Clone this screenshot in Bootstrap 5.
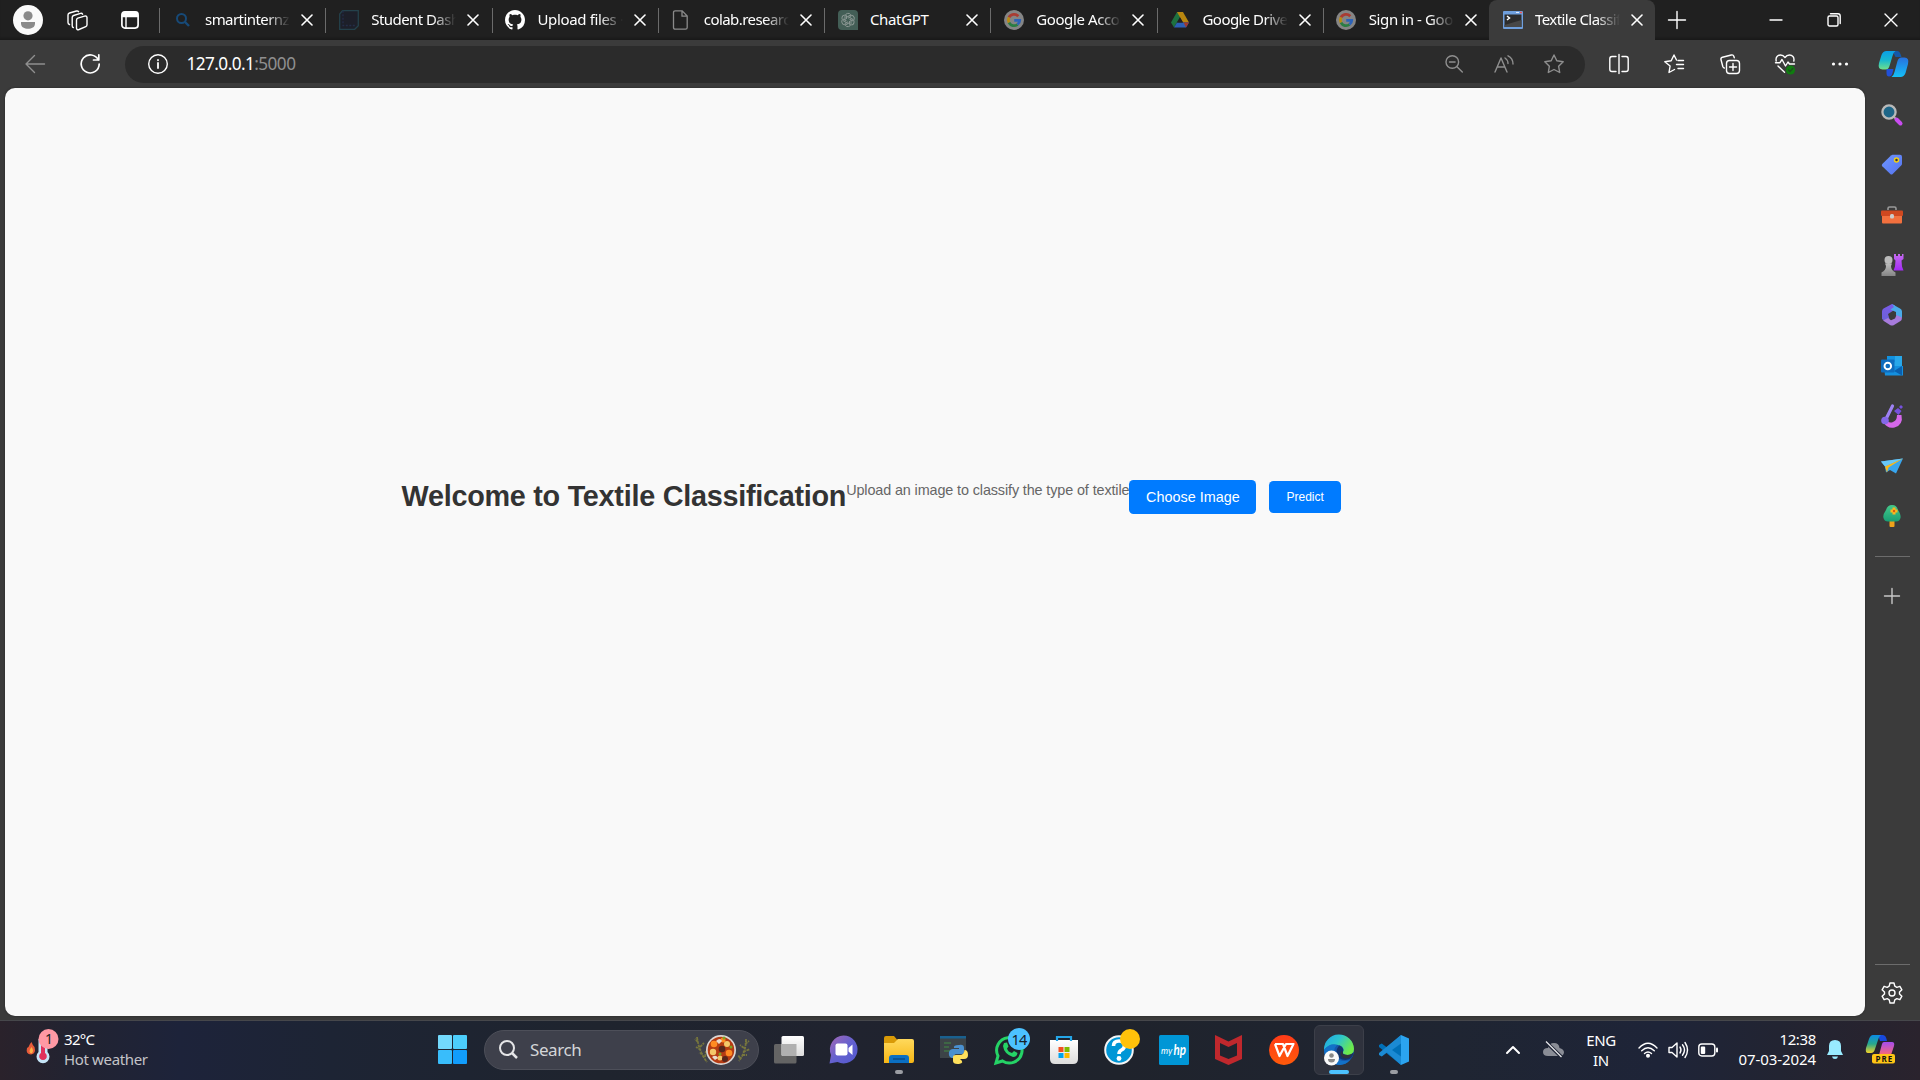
<!DOCTYPE html>
<html lang="en">
<head>
<meta charset="utf-8">
<title>Textile Classification</title>
<link href="https://cdn.jsdelivr.net/npm/bootstrap@5.3.0/dist/css/bootstrap.min.css" rel="stylesheet">
<style>
body{background:#3b3b3b;font-family:"Noto Sans","Open Sans",sans-serif;color:#fff;font-size:15px;line-height:20px;overflow:hidden}
svg{display:block;flex:none;overflow:visible}
.ln{fill:none;stroke:#fff;stroke-width:1.4;stroke-linecap:round;stroke-linejoin:round}
.dim{stroke:#8f8f8f}
.strip{height:40px;background:#202020;box-shadow:inset 0 -3px 2px -1px #1a1a1a}
.s56{width:56px}.s43{width:43px}.s60{width:60px}.s57{width:57.5px}.s55{width:55px}.s50{width:50px}.s66{width:66px}
.tabx{width:166.25px;height:40px;padding-left:13.5px;position:relative;flex:none}
.tabx::before{content:"";position:absolute;left:0;top:8px;width:1px;height:25px;background:#6b6b6b}
.tabx .ttl{width:85px;margin-left:12.5px;padding-bottom:1.5px;overflow:hidden;white-space:nowrap;letter-spacing:-.56px;-webkit-mask-image:linear-gradient(90deg,#000 72%,transparent)}
.tabx .ttl.full{-webkit-mask-image:none;letter-spacing:-.36px}
.tabx .xx{margin-left:11px}
.tabx.on{background:#3b3b3b;border-radius:8px 8px 0 0}
.tabx.on::before{display:none}
.bar{height:48px;padding-left:7.5px}
.addr{width:1460px;height:37px;border-radius:19px;background:#2b2b2b;margin:0 7px 0 7.5px;padding-right:6px;font-size:17.2px;letter-spacing:-.56px}
.addr i{font-style:normal;color:#8f8f8f}
.mid{height:932px;padding-left:5px}
.view{width:1860px;height:928px;background:#f9f9f9;border-radius:10px;padding:392px 0 0 396.5px;font-family:"Liberation Sans",sans-serif;box-shadow:0 0 2px #222}
.view h1{font-size:28.8px;font-weight:700;line-height:33px;color:#333;margin:0;white-space:nowrap;letter-spacing:-.265px}
.view p{font-size:14.4px;line-height:17px;color:#666;margin:2px 0 0;white-space:nowrap;letter-spacing:-.118px}
.go{background:#007bff;color:#fff;border-radius:4.5px;border:0;padding:0;--bs-btn-hover-bg:#007bff}
.pick{width:127px;height:34px;margin-top:-.5px;font-size:14.4px;line-height:34px}
.pred{width:72.5px;height:32px;margin:1px 0 0 12.5px;font-size:12px;line-height:32px}
.side{width:54px;padding-top:2px}
.side .it{height:50.1px}
.rule{width:35px;height:1px;background:#6c6c6c}
.task{height:60px;padding-bottom:1.5px;border-top:1px solid #46474b;background:linear-gradient(90deg,#2a222b 0,#222331 70px,#1d233a 180px,#1d2434 330px,#1f242e 600px,#20232f 850px,#1f232c 1120px,#1f2532 1450px,#1e2438 1660px,#222432 1780px,#2a232d)}
.wx{width:438px;padding-left:25px}
.wx .t2{color:#c4c4c8}
.up{padding-bottom:2px}
.find{width:275px;height:40px;border-radius:20px;background:#3e404b;border:1px solid #4d4f59;margin-left:17px;padding-left:14px;color:#d4d5d8;font-size:17px;letter-spacing:-.4px}
.app{width:55px;height:50px;position:relative}
.app.on::before{content:"";position:absolute;inset:0 2.5px;background:#2f323d;border:1px solid #3c3f49;border-radius:6px}
.app svg{position:relative}
.app .dot{position:absolute;bottom:1px;left:23.5px;width:8px;height:4px;border-radius:2px;background:#9b9da3}
.app.on .dot{left:17.5px;width:20px;background:#4cc2ff}
.seg{letter-spacing:-.35px}
</style>
<script src="https://cdn.jsdelivr.net/npm/bootstrap@5.3.0/dist/js/bootstrap.bundle.min.js"></script>
</head>
<body>
<svg width="0" height="0" class="position-absolute">
<defs>
<linearGradient id="gp" x2="0" y2="1"><stop stop-color="#7a5be8"/><stop offset="1" stop-color="#6a62d8"/></linearGradient>
<linearGradient id="gq" x2="0" y2="1"><stop stop-color="#c56bf0"/><stop offset="1" stop-color="#a32bf5"/></linearGradient>
<linearGradient id="gb" x2="1" y2="1"><stop stop-color="#6f97ff"/><stop offset="1" stop-color="#5472ee"/></linearGradient>
<linearGradient id="gg" x2="0" y2="1"><stop stop-color="#bdbdbd"/><stop offset="1" stop-color="#858585"/></linearGradient>
<linearGradient id="c1" x2="0" y2="1"><stop stop-color="#0a9fe8"/><stop offset=".5" stop-color="#18b8cf"/><stop offset="1" stop-color="#6fe08a"/></linearGradient>
<linearGradient id="c2" x2="0" y2="1"><stop stop-color="#2870dd"/><stop offset="1" stop-color="#14c0f8"/></linearGradient>
<linearGradient id="c3" x2="0" y2="1"><stop stop-color="#0b8be6"/><stop offset=".5" stop-color="#28a88c"/><stop offset="1" stop-color="#f4d327"/></linearGradient>
<linearGradient id="c4" x2="0" y2="1"><stop stop-color="#a44cf0"/><stop offset="1" stop-color="#fb6a72"/></linearGradient>
<linearGradient id="gf" x2="0" y2="1"><stop stop-color="#ffd95c"/><stop offset="1" stop-color="#f7b615"/></linearGradient>
<linearGradient id="gch" x2="1" y2="1"><stop stop-color="#a667b4"/><stop offset=".5" stop-color="#6461cf"/><stop offset="1" stop-color="#5258cf"/></linearGradient>
<linearGradient id="ge" x2="1" y2=".5"><stop stop-color="#1fa5e8"/><stop offset=".5" stop-color="#2dc5cc"/><stop offset="1" stop-color="#6eea4a"/></linearGradient>
<linearGradient id="gwp" x2="0" y2="1"><stop stop-color="#ff3b18"/><stop offset="1" stop-color="#ff5a0a"/></linearGradient>
<linearGradient id="gs" x2="0" y2="1"><stop stop-color="#fff"/><stop offset="1" stop-color="#dcdcdc"/></linearGradient>
<linearGradient id="gt" x2="0" y2="1"><stop stop-color="#45c98a"/><stop offset="1" stop-color="#189e74"/></linearGradient>
<symbol id="x" viewBox="0 0 12 12"><path class="ln" style="stroke-width:1.6" d="M1 1 11 11M11 1 1 11"/></symbol>
<symbol id="goog" viewBox="0 0 20 20"><circle cx="10" cy="10" r="10" fill="#858585"/><g fill="none" stroke-width="2.8"><path d="M14.3 6.2A5.7 5.7 0 0 0 5 7.4" stroke="#a93c33"/><path d="M5 7.4a5.7 5.7 0 0 0 0 5.2" stroke="#b98a12"/><path d="M5 12.6a5.7 5.7 0 0 0 8.5 1.9" stroke="#2a7d43"/><path d="M13.5 14.5A5.5 5.5 0 0 0 15.7 10.4H10.2" stroke="#2d63b8"/></g></symbol>
</defs></svg>

<div class="strip d-flex align-items-center">
 <div class="s56 d-flex justify-content-center"><svg width="30" height="30"><circle cx="15" cy="15" r="15" fill="#fafafa"/><circle cx="15" cy="10.8" r="4.6" fill="#8a8a8a"/><path d="M8 17h14v1.5c0 4-3.5 5.2-7 5.2s-7-1.200-7-5.200z" fill="#8a8a8a"/></svg></div>
 <div class="s43 d-flex justify-content-center"><svg width="21" height="21" viewBox="0 0 21 21" class="ln"><path d="M10.800 8.200 17.500 6.100Q19.600 5.500 20 7.500V14.800Q20 16.200 18.800 16.700L12 19.500Q9.800 20.200 9.500 18.200V10.200Q9.500 8.700 10.800 8.200zM6.300 17.500Q5.200 17.300 5.200 15.700V7.500Q5.200 6 6.600 5.500L13.500 3.400Q15 3 15.600 4.200M2.500 14.500Q1 14 1 12.500V5Q1 3.500 2.500 3L9.500 1Q11 .7 11.600 1.700"/></svg></div>
 <div class="s60 d-flex justify-content-center"><svg width="18" height="18" class="ln" style="margin-left:1.500px"><rect x=".9" y=".9" width="16.200" height="16.200" rx="3" stroke-width="1.700"/><path d="M1.500 1.500h15v4h-15z" fill="#fff"/><path d="M5 6v11"/></svg></div>
 <div class="tabx d-flex align-items-center"><svg width="20" height="20"><circle cx="8.500" cy="8.500" r="4.500" fill="none" stroke="#174a78" stroke-width="2"/><path d="m12 12 4 4" stroke="#174a78" stroke-width="2.400"/></svg><div class="ttl">smartinternz</div><svg class="xx" width="12" height="12"><use href="#x"/></svg></div>
 <div class="tabx d-flex align-items-center"><svg width="20" height="20" fill="none" stroke-width="1.300"><path d="M3.500.7h15.800v15l-3.600 3.600H.7V4z" fill="#1d1f29" stroke="#24414b"/><path d="M4 .8v14.700h12" stroke="#242d48" stroke-dasharray="2 1.500"/></svg><div class="ttl">Student Dashb</div><svg class="xx" width="12" height="12"><use href="#x"/></svg></div>
 <div class="tabx d-flex align-items-center"><svg width="20" height="20" viewBox="0 0 16 16"><path fill="#fff" d="M8 0C3.580 0 0 3.580 0 8c0 3.540 2.290 6.530 5.470 7.590.4.070.55-.17.55-.38 0-.19-.01-.82-.01-1.490-2.010.37-2.530-.49-2.690-.94-.09-.23-.48-.94-.82-1.130-.28-.15-.68-.52-.01-.53.63-.01 1.080.58 1.230.82.72 1.210 1.870.87 2.330.66.070-.52.28-.87.510-1.070-1.780-.2-3.640-.89-3.640-3.950 0-.87.310-1.590.82-2.150-.08-.2-.36-1.020.08-2.120 0 0 .67-.21 2.200.82.640-.18 1.320-.27 2-.27s1.360.09 2 .27c1.530-1.040 2.200-.82 2.200-.82.440 1.100.16 1.920.08 2.120.510.560.82 1.270.82 2.150 0 3.070-1.870 3.750-3.650 3.950.29.250.540.730.540 1.480 0 1.070-.01 1.930-.01 2.200 0 .21.15.460.550.380A8.010 8.010 0 0 0 16 8c0-4.420-3.580-8-8-8z"/></svg><div class="ttl" style="letter-spacing:-.36px">Upload files · v</div><svg class="xx" width="12" height="12"><use href="#x"/></svg></div>
 <div class="tabx d-flex align-items-center"><svg width="20" height="20" fill="none" stroke="#8a8a8a" stroke-width="1.300"><path d="M4.200.8h7l5 5.200v11.500q0 1.700-1.700 1.700H4.200Q2.500 19.200 2.500 17.500v-15Q2.500 .8 4.200.8zM11 1v5.200h5"/></svg><div class="ttl">colab.research</div><svg class="xx" width="12" height="12"><use href="#x"/></svg></div>
 <div class="tabx d-flex align-items-center"><svg width="20" height="20"><path d="M4 0h12q4 0 4 4v16H4q-4 0-4-4V4q0-4 4-4z" fill="#435e56"/><g fill="none" stroke="#8c9894" stroke-width="1"><path id="p1" d="M7 10V6.200a3.200 3.200 0 0 1 5.800-1.500M10 8.200 13.300 6.300"/><use href="#p1" transform="rotate(60 10 10)"/><use href="#p1" transform="rotate(120 10 10)"/><use href="#p1" transform="rotate(180 10 10)"/><use href="#p1" transform="rotate(240 10 10)"/><use href="#p1" transform="rotate(300 10 10)"/></g></svg><div class="ttl full">ChatGPT</div><svg class="xx" width="12" height="12"><use href="#x"/></svg></div>
 <div class="tabx d-flex align-items-center"><svg width="20" height="20"><use href="#goog"/></svg><div class="ttl" style="letter-spacing:-.4px">Google Accou</div><svg class="xx" width="12" height="12"><use href="#x"/></svg></div>
 <div class="tabx d-flex align-items-center"><svg width="20" height="20"><path d="M7 2h6L4 17.500 1 12.500z" fill="#1e7140"/><path d="M7 2h6l6 10.500h-6z" fill="#b8860f"/><path d="M4 17.500 7 12.500h12l-3 5z" fill="#2c5fb5"/><path d="M13.500 12.500H19l-3 5z" fill="#a0392f"/><path d="m10 7.500 3 5H7z" fill="#202020"/></svg><div class="ttl">Google Drive -</div><svg class="xx" width="12" height="12"><use href="#x"/></svg></div>
 <div class="tabx d-flex align-items-center"><svg width="20" height="20"><use href="#goog"/></svg><div class="ttl" style="letter-spacing:-.4px">Sign in - Goog</div><svg class="xx" width="12" height="12"><use href="#x"/></svg></div>
 <div class="tabx on d-flex align-items-center"><svg width="20" height="20"><rect y="1" width="20" height="18" rx="1" fill="#6f9fdd"/><rect x="1.500" y="4.500" width="17" height="12.500" fill="#2c2c2c"/><path d="M1.500 15l17-5v7h-17z" fill="#474747"/><path d="m4 6 2.500 2L4 10" fill="none" stroke="#fff" stroke-width="1.500"/><path d="M13 2.500h3" stroke="#ddeaff"/><path d="M17 2.500h2" stroke="#e55" stroke-width="1.500"/></svg><div class="ttl">Textile Classifi</div><svg class="xx" width="12" height="12"><use href="#x"/></svg></div>
 <div class="s43 d-flex justify-content-center"><svg width="18" height="18" class="ln"><path d="M9 .5v17M.5 9h17"/></svg></div>
 <div class="ms-auto s57 d-flex justify-content-center"><svg width="14" height="14" class="ln"><path d="M1 7h12"/></svg></div>
 <div class="s57 d-flex justify-content-center"><svg width="14" height="14" class="ln"><rect x="1" y="3" width="10" height="10" rx="1.500"/><path d="M3.500.8H11q2.200 0 2.200 2.200v7.500"/></svg></div>
 <div class="s57 d-flex justify-content-center"><svg width="14" height="14" class="ln"><path d="m1 1 12 12M13 1 1 13"/></svg></div>
</div>

<div class="bar d-flex align-items-center">
 <div class="s55 d-flex justify-content-center"><svg width="20" height="18" class="ln dim"><path d="M19.500 9H1M9.500.5 1 9l8.500 8.500"/></svg></div>
 <div class="s55 d-flex justify-content-center"><svg width="20" height="20" class="ln" style="stroke-width:1.700"><path d="M18.300 6A9 9 0 1 0 19.200 10M18.800.8V6h-5.300"/></svg></div>
 <div class="addr d-flex align-items-center">
  <div class="s66 d-flex justify-content-center flex-shrink-0"><svg width="20" height="20" class="ln" style="margin-right:1px"><circle cx="10" cy="10" r="9.300"/><path d="M10 9v5M10 6v.3" stroke-width="1.800"/></svg></div>
  <div style="margin-left:-4.500px">127.0.0.1<i>:5000</i></div>
  <div class="ms-auto s50 d-flex justify-content-center"><svg width="18" height="18" class="ln dim"><circle cx="7.300" cy="7" r="6.300"/><path d="m12 11.700 5.300 5.300M4.500 7h5.600"/></svg></div>
  <div class="s50 d-flex justify-content-center"><svg width="20" height="18" class="ln dim"><path d="M1 17 7 3l6 14M3.300 12h7.500M11 3q3 2 3 5.500M14 .8q5 2.500 5 8.200"/></svg></div>
  <div class="s50 d-flex justify-content-center"><svg width="20" height="20" class="ln dim"><path d="M10 1l2.800 5.800 6.400.9-4.600 4.500 1.100 6.300L10 15.500l-5.700 3 1.100-6.300L.8 7.700l6.400-.9z"/></svg></div>
 </div>
 <div class="s55 d-flex justify-content-center"><svg width="20" height="20" class="ln" style="margin-right:1px"><path d="M7 2.500H3Q.8 2.500.8 4.700v10.600q0 2.200 2.200 2.200h4M13 2.500h4q2.200 0 2.200 2.200v10.600q0 2.200-2.200 2.200h-4M10 .5v19"/></svg></div>
 <div class="s55 d-flex justify-content-center"><svg width="20" height="20" class="ln" style="margin-right:1px"><path d="M10.500 15.500 5 18.500 6.100 12 .8 7.700l6.400-.9L10 1l2.500 5M14 6.500h5.500M12.500 10.500h7M14 14.500h5.500"/></svg></div>
 <div class="s55 d-flex justify-content-center"><svg width="20" height="20" class="ln"><rect x="6.500" y="6.500" width="13" height="13" rx="3"/><path d="M13 9.500v7M9.500 13h7M14.300 3.800 13.800 2.300Q13.200.5 11.300 1L2.500 3.200Q.5 3.900 1 5.800l1.800 6.700q.5 1.300 1.500 1.500"/></svg></div>
 <div class="s55 d-flex justify-content-center"><svg width="20" height="20" class="ln"><path d="M1.200 7C.3 2.800 3 1 5.500 1S9.300 2.500 10 3.500C10.700 2.500 12 1 14.500 1s5.200 1.800 4.300 6M.5 8.800h4.300L7 5.500l3.500 6.500 2.500-4 1.500 2h5M3 12l6.500 6.200"/><circle cx="15.500" cy="16" r="4.600" fill="#107c10" stroke="none"/><path d="m13.500 16 1.500 1.500 2.800-3" style="stroke:#1e4e1e"/></svg></div>
 <div class="s55 d-flex justify-content-center"><svg width="18" height="4" fill="#fff"><circle cx="2.500" cy="2" r="1.600"/><circle cx="9" cy="2" r="1.600"/><circle cx="15.500" cy="2" r="1.600"/></svg></div>
 <div class="flex-fill d-flex justify-content-center"><svg width="30" height="28" viewBox="0.500 0 30 28"><path d="M14 1h5q2 0 3 3l1 3h-6z" fill="#1458a8"/><path d="M8 19h7l-1 4q-1 3.500-3.500 3.500T8 23z" fill="#2150d8"/><path d="M8 1h9q-2 1-3 5l-3 10q-1 3.500-4 3.500H4Q-1 19.500.5 13L3 5Q4.500 1 8 1z" fill="url(#c1)"/><path d="M22 27h-9q2-1 3-5l3-11q1-3.500 4-3.500h3q5 0 3.500 6.500L27 23q-1.500 4-5 4z" fill="url(#c2)"/></svg></div>
</div>

<div class="mid d-flex">
 <main class="view d-flex align-items-start">
  <h1>Welcome to Textile Classification</h1>
  <p>Upload an image to classify the type of textile</p>
  <button class="btn go pick">Choose Image</button>
  <button class="btn go pred">Predict</button>
 </main>
 <aside class="side d-flex flex-column align-items-center">
  <div class="it d-flex align-items-center"><svg width="22" height="22"><path d="m13 13 3 3" stroke="#aaa" stroke-width="2"/><path d="m15.500 15.500 4 4" stroke="#c94cf0" stroke-width="4" stroke-linecap="round"/><circle cx="8" cy="8" r="6.600" fill="#1e6688" stroke="#b9b9b9" stroke-width="2.300"/></svg></div>
  <div class="it d-flex align-items-center"><svg width="22" height="22"><path d="M11.500.8H19q2 0 2 2v7q0 1-.8 1.800l-8.500 8.500q-1.200 1-2.400 0L1.300 12.300Q.2 11.200 1.300 10L10 1.500z" fill="url(#gb)"/><circle cx="15.500" cy="6" r="2" fill="#334" stroke="#f2cf12" stroke-width="1.500"/></svg></div>
  <div class="it d-flex align-items-center"><svg width="22" height="18"><path d="M7 4V2.500Q7 1 8.500 1h5Q15 1 15 2.500V4" fill="none" stroke="#999" stroke-width="1.600"/><rect x="1" y="8" width="20" height="9.500" rx="1" fill="#f2703e"/><rect y="4.500" width="22" height="5.500" rx="1" fill="#cf4820"/><rect x="9" y="8" width="4" height="4.500" rx="1.500" fill="#ccc"/></svg></div>
  <div class="it d-flex align-items-center"><svg width="23" height="24"><path d="M13 1h2v2h2V1h2v2h2V1h1.500v5l-2 1.500.5 6 1.500 4h-10l1.500-4 .5-6-1.500-1.500z" fill="url(#gq)"/><circle cx="7.500" cy="7" r="4" fill="#bbb"/><path d="M4 10.500h7l-1 2.500q0 4 4.500 6.500V23H.5v-3.500Q5 17 5 13z" fill="url(#gg)"/></svg></div>
  <div class="it d-flex align-items-center"><svg width="22" height="22"><path d="M11 0 2.500 4.500Q1 5.500 1 7.500V15l4 3 3.500-3-1.500-5 7-4.500V1.500z" fill="url(#gp)"/><path d="M11 0l8 4.500q2 1 2 3V14l-6-2.500V8L9.500 5.500 13 3z" fill="#4aabe9"/><path d="M2 16.500 9 21q2 1 4 0l6.500-4q1.500-1 1.500-3.500L15.500 11 14 14.500l-4 1.700-3-2.200z" fill="#a77bdc"/></svg></div>
  <div class="it d-flex align-items-center"><svg width="22" height="20"><path d="M6 0h15v12H6z" fill="#28a8ea"/><path d="M6 0h8v6H6z" fill="#1292e0"/><path d="M3 10h19v9.500H4z" fill="#1490df"/><path d="m13 15 8-5v9.500z" fill="#0a5fae"/><rect y="3.500" width="13.500" height="13" rx="1" fill="#0f6cbd"/><circle cx="6.800" cy="10" r="3.300" fill="none" stroke="#fff" stroke-width="1.900"/></svg></div>
  <div class="it d-flex align-items-center"><svg width="23" height="24"><path d="M4.500 14Q7 20 12 18q4-1.500 4-7h4.500q2 10-7 12.500Q6 25 2.500 18z" fill="#d568ea"/><path d="M11.500 2 5 15" stroke="#9e82f3" stroke-width="3.200" stroke-linecap="round"/><circle cx="4" cy="16.500" r="3.800" fill="#8468e8"/><path d="m13 7 4-3 3.500 3-3 4zM20 1l2 2-2 2-2-2z" fill="#7651dd"/></svg></div>
  <div class="it d-flex align-items-center"><svg width="22" height="16"><path d="M0 3.500 22 .5 15 15.500l-6-3.500-4 2.500-1-6z" fill="#38a5ee"/><path d="M0 3.500 22 .5 4 8.500z" fill="#69c8f7"/><path d="M22 .5 7.500 9.500 6 14.500 4 8.500z" fill="#f8b91c"/></svg></div>
  <div class="it d-flex align-items-center"><svg width="20" height="22"><rect x="7.500" y="15" width="5" height="7" rx="1" fill="#eea21b"/><path d="M10 0c3.500 0 5 1.800 6 5 2 3 3 5.500 2.500 8q-1 3.500-4.500 3.500H6Q2.500 16.500 1.500 13 .5 10 4 5 5.500 0 10 0z" fill="url(#gt)"/><path d="M12 2.500v7M8.500 6h7" stroke="#ffb51c" stroke-width="3"/><circle cx="12" cy="6" r="1.200" fill="#d35c14"/></svg></div>
  <div class="rule" style="margin-top:15px"></div>
  <div class="d-flex align-items-center" style="height:78px"><svg width="16" height="16" class="ln" style="stroke:#c8c8c8"><path d="M8 .5v15M.5 8h15"/></svg></div>
  <div class="rule mt-auto"></div>
  <div class="d-flex align-items-center" style="height:55px"><svg width="22" height="22" viewBox="-11 -11 22 22" class="ln"><circle r="3"/><path d="M-2-10h4l.8 3.200 2 1.100 3.100-1 2 3.500L7.500-.9V.9l2.400 2.300-2 3.500-3.100-1-2 1.100L2 10h-4l-.8-3.200-2-1.100-3.100 1-2-3.500L-7.500.9V-.9l-2.400-2.300 2-3.500 3.100 1 2-1.100z"/></svg></div>
 </aside>
</div>

<footer class="task d-flex align-items-center">
 <div class="wx d-flex align-items-center">
  <svg width="36" height="38" viewBox="0 0 36 38"><g transform="translate(-.5 -2)"><path d="M7 13q1 3 3 5 2 7-3.500 7.500Q1 25 2.500 19l1.500-1q1-3 3-5z" fill="#e75b3a"/><path d="M7 18q3 4 0 6.500-3-1-1.500-4z" fill="#ffb347"/><path d="M14 10h9v13a6.500 6.500 0 1 1-9 0z" fill="#c5e5f7"/><path d="M16.500 12h4v12a3.800 3.800 0 1 1-4 0z" fill="#e0315b"/><circle cx="24" cy="10" r="10" fill="#ff99a4"/><text x="20.500" y="15" font-size="14" fill="#222">1</text></g></svg>
  <div class="seg up" style="margin-left:3px"><div style="letter-spacing:-.7px">32°C</div><div class="t2">Hot weather</div></div>
 </div>
 <svg width="29" height="29"><rect width="14" height="14" rx="1" fill="#73d9fc"/><rect x="15" width="14" height="14" rx="1" fill="#4ccefc"/><rect y="15" width="14" height="14" rx="1" fill="#39bdfb"/><rect x="15" y="15" width="14" height="14" rx="1" fill="#119dfc"/></svg>
 <div class="find d-flex align-items-center">
  <svg width="19" height="19" fill="none" stroke="#e5e5e7" stroke-width="2"><circle cx="8" cy="8" r="7"/><path d="m13 13 5 5" stroke-width="2.500"/></svg>
  <span style="margin-left:12px">Search</span>
  <svg class="ms-auto" style="margin-right:6px" width="58" height="32"><g fill="none" stroke="#77763d"><path d="M3 3q2 15 10 25M4 8l-3-3M6 13l4-4M7 16l-5-3M9 20l-4-1M11 23l1-6M52 5q0 13-7 22M51 10l4-3M50 14l-4-3M49 18l7-3M48 21l5 0M46 24l-2-3" stroke-width="1.800" stroke-dasharray="3 .8"/></g><circle cx="27" cy="16" r="15" fill="#ddd8d5"/><circle cx="27" cy="16" r="13.300" fill="#b53b13"/><g fill="#ff8b23"><circle cx="20" cy="10" r="3.300"/><circle cx="35" cy="19" r="3.300"/><circle cx="29" cy="6" r="2.500"/></g><g fill="#f4c86a"><circle cx="19" cy="18" r="3.200"/><circle cx="33" cy="10" r="3"/><circle cx="26" cy="24" r="2.500"/></g><g fill="#57251c"><circle cx="28" cy="15" r="3.300"/><circle cx="31" cy="25" r="3"/></g><g fill="#e9dccd"><path d="M22 7q4-4 6 0l-3 3zM18 23q4-3 6 1l-3 2z"/></g><g fill="#7ba325"><circle cx="30" cy="4" r="1.500"/><circle cx="26" cy="20" r="1.500"/><circle cx="37" cy="13" r="1.500"/></g></svg>
 </div>
 <div class="d-flex" style="margin-left:2px">
  <div class="app d-flex align-items-center justify-content-center"><svg width="30" height="28"><rect y="8" width="22.500" height="19.500" rx="1.500" fill="#646464"/><rect x="7.500" y="0" width="22.500" height="20" rx="1.500" fill="url(#gs)"/><path d="M7.500 8h15v12H9q-1.500 0-1.500-1.500z" fill="#b0b0b0"/></svg></div>
  <div class="app d-flex align-items-center justify-content-center"><svg width="29" height="29"><path d="M14.500.5a14 14 0 1 1-6 26.600L.5 28.500 2 20A14 14 0 0 1 14.500.5z" fill="url(#gch)"/><rect x="6.500" y="8.500" width="12" height="12" rx="2" fill="#fff"/><path d="m19.500 13 4-3.500v10.500l-4-3.500z" fill="#fff"/></svg></div>
  <div class="app d-flex align-items-center justify-content-center"><svg width="30" height="28"><path d="M0 2q0-2 2-2h8l3 3.500h15V12H0z" fill="#d99a07"/><path d="M0 7h10l4-4h14q2 0 2 2v20q0 2-2 2H0z" fill="url(#gf)"/><path d="M5 27v-5q0-3 3-3h14q3 0 3 3v5z" fill="#0b6fc2"/><path d="M9 23h12" stroke="#0a4680" stroke-width="1.300"/></svg><span class="dot"></span></div>
  <div class="app d-flex align-items-center justify-content-center"><svg width="28" height="29"><path d="M0 1h26v22H0z" fill="#3c4347"/><path d="M0 1h26v2.500H0z" fill="#19608f"/><path d="M4 8h7M4 12h5M4 16h6" stroke="#408b45" stroke-width="1.200"/><path d="M19 10q5-1 5 3v4q0 2-3 2h-5q-2 0-2 4h-2q-4-1-3-6 1-3 4-3h6v-1h-5q-1-3 5-3z" fill="#4a90cf"/><path d="M24.500 15q3.500 0 3.500 5 0 4-4 4h-4q5 4-1 5-6 .5-6-3v-4q0-2 3-2h4q4 0 4.500-5z" fill="#ffe05c"/></svg></div>
  <div class="app d-flex align-items-center justify-content-center"><svg width="30" height="30"><path d="M2 28l2-7a12.700 12.700 0 1 1 4.500 5z" fill="none" stroke="#25d366" stroke-width="3"/><path d="M10 8l3-.5 1.500 4-1.500 2q1 3.500 5 4.500l2-2 3.500 2q-.5 4-4.500 4Q10 19 9 11z" fill="#25d366"/><circle cx="25" cy="4" r="11" fill="#4cc2ff"/><text x="17.500" y="9.500" font-size="14.500" letter-spacing="-.8" fill="#17212b">14</text></svg></div>
  <div class="app d-flex align-items-center justify-content-center"><svg width="30" height="30"><path d="M1 5h28v19q0 5-5 5H6q-5 0-5-5z" fill="url(#gs)"/><path d="M8 6V2h14v4" fill="none" stroke="#24a6e8" stroke-width="2.200"/><path fill="#f25022" d="M9.500 12H14.500v5h-5z"/><path fill="#7fba00" d="M15.500 12h5v5h-5z"/><path fill="#00a4ef" d="M9.500 18h5v5h-5z"/><path fill="#ffb900" d="M15.500 18h5v5h-5z"/></svg></div>
  <div class="app d-flex align-items-center justify-content-center"><svg width="30" height="30"><circle cx="15" cy="15" r="13.800" fill="#0096d6" stroke="#f4f4f4" stroke-width="2"/><path d="M9.500 11q0-5 5.500-5 5.500 0 5.500 4.500 0 3-3 4.500-2.500 1.300-2.500 4" fill="none" stroke="#fff" stroke-width="3.600"/><circle cx="15" cy="23.500" r="2.400" fill="#fff"/><circle cx="26" cy="4" r="10" fill="#ffc20a"/></svg></div>
  <div class="app d-flex align-items-center justify-content-center"><svg width="30" height="30"><rect width="30" height="30" rx="1.500" fill="#0096d6"/><text x="2" y="18.500" fill="#fff" font-size="9" font-style="italic" font-family="Lato">my</text><text x="14.500" y="19.500" fill="#fff" font-size="15" font-style="italic" font-family="Lato" textLength="12.500" lengthAdjust="spacingAndGlyphs" font-weight="700">hp</text></svg></div>
  <div class="app d-flex align-items-center justify-content-center"><svg width="27" height="30"><path d="M0 0 13.500 6.500 27 0v24L13.500 30 0 24zM5 8v12.500L13.500 24l8.500-3.500V8l-8.500 4z" fill="#c0282d" fill-rule="evenodd"/></svg></div>
  <div class="app d-flex align-items-center justify-content-center"><svg width="30" height="30"><circle cx="15" cy="15" r="15" fill="url(#gwp)"/><path d="M6 9h8l4.500 12L24.500 9H17l-6.500 12L6 9" fill="none" stroke="#fff" stroke-width="2.200" stroke-linejoin="round"/></svg></div>
  <div class="app on d-flex align-items-center justify-content-center"><svg width="30" height="30"><circle cx="15" cy="15" r="15" fill="#1557ad"/><path d="M0 15A15 15 0 0 1 30 14q0 6-7 6-5 0-4-3 2-4-3-6.500Q6 7 0 15z" fill="url(#ge)"/><path d="M0 15Q5 7.500 13 10q-5 5-1 12 5 6 14 3-6 7-15 4Q0 25 0 15z" fill="#1371c8"/><path d="M19 17q-1 3 5 3 4-.2 5.500-3 0 7-8 8-8 0-9-8 0-4 3-6.500 5 2.500 3.500 6.500z" fill="#12346d"/><path d="M18.500 17q-1 3 5 3 5-.2 6-4-3 9-10 7-5-3-2-7z" fill="#2f323d"/><circle cx="7.500" cy="23" r="7.500" fill="#fafafa"/><circle cx="7.500" cy="20.500" r="2.300" fill="#888"/><path d="M4 24h7q0 3.500-3.500 3.500T4 24z" fill="#888"/></svg><span class="dot"></span></div>
  <div class="app d-flex align-items-center justify-content-center"><svg width="30" height="30"><path d="M22 0 8 12.500 2.800 8.500 0 10v2l22 18z" fill="#0070b8"/><path d="M22 30 8 17.500l-5.200 4L0 20v-2L22 0v8.500L13 15l9 6.500z" fill="#1b8ad3"/><path d="m22 0 8 3.500v23L22 30z" fill="#2ba4f0"/></svg><span class="dot"></span></div>
 </div>
 <div class="d-flex align-items-center seg text-nowrap ms-auto" style="padding-right:25px">
  <svg width="14" height="9" class="ln" style="stroke-width:2"><path d="m1 8 6-6 6 6"/></svg>
  <svg style="margin-left:23px" width="21" height="18"><path d="M5 15q-5 0-5-4t5-4q1-5 6-5t5.500 5Q21 8 21 11.500 20.500 15 17 15z" fill="#8a8d96"/><path d="m3 1 16 15.500" stroke="#1e2435" stroke-width="3.500"/><path d="m3 .5 15.500 15.500" stroke="#e8e8ea" stroke-width="1.300"/></svg>
  <div class="text-center" style="margin-left:22px;width:30px">ENG<br>IN</div>
  <svg style="margin-left:21.500px" width="20" height="16" class="ln"><path d="M1 6Q10-3.500 19 6M3.700 8.800q6.300-6 12.600 0M6.500 11.500q3.500-3 7 0"/><circle cx="10" cy="13.800" r="1.300" fill="#fff"/></svg>
  <svg style="margin-left:10px" width="20" height="16" class="ln"><path d="M1 5.500h3L9 1v14l-5-4.500H1zM12 5q2 3 0 6M14.500 2.800q4 5.200 0 10.400M17 .5q5 7.500 0 15"/></svg>
  <svg style="margin-left:10px" width="20" height="14" class="ln"><rect x=".8" y="1" width="16" height="12" rx="3"/><path d="M3.800 4.500h2.400v5.500H3.800z" fill="#fff" stroke-width="2"/><path d="M19 5.500v3" stroke-width="2"/></svg>
  <div class="text-end up" style="margin-left:18.500px;width:80px;letter-spacing:-.07px"><span class="seg">12:38</span><br>07-03-2024</div>
  <svg style="margin-left:11px" width="16" height="20" fill="#99ebff"><path d="M8 0q6 0 6 6v5l2 4H0l2-4V6q0-6 6-6zM5 16.500h6Q10.500 19 8 19t-3-2.500z"/></svg>
  <svg style="margin-left:23px" width="29" height="29"><path d="M12 0h5q3 0 4 6h-7z" fill="#1748dc"/><path d="M7 0h8q-2 1-3 5L9 14q-1 4-4 4H2q-3 0-2-5L3 4Q4.500 0 7 0z" fill="url(#c3)"/><path d="M18 7h8q3 0 2 4l-3 9H13l3-11q.5-2 2-2z" fill="url(#c4)"/><rect x="6" y="19" width="23" height="9.500" rx="2" fill="#ffc515"/><text x="9.500" y="26.700" font-size="8" font-weight="700" textLength="16.500" fill="#111">PRE</text></svg>
 </div>
</footer>
</body>
</html>
